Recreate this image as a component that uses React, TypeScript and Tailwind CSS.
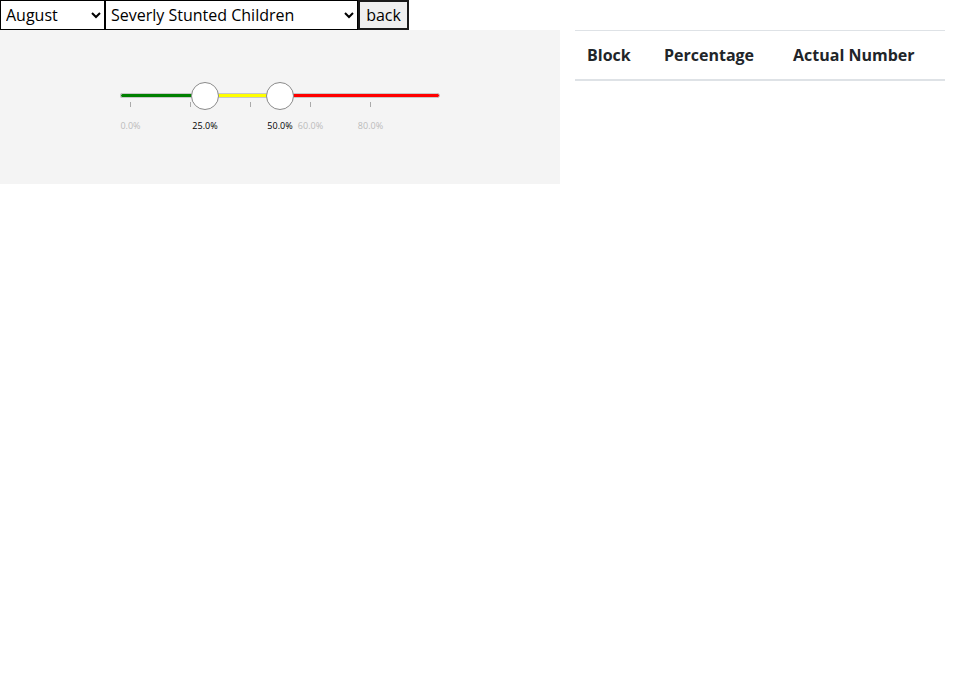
import React from 'react';

const ticks = [0, 20, 40, 60, 80];
const lower = 25;
const upper = 50;

const hidden = [20, 40];

// 0% sits 10px in from the track's left end, 3px per percent
const pos = (v: number) => 10 + v * 3;

const ThresholdSlider: React.FC = () => {
  return (
    <div className="relative w-[320px] h-[60px]">
      {/* track */}
      <div className="absolute left-0 right-0 top-0 h-[5px] rounded-full bg-[#ff0000] border border-[#c8c8c8]" />
      <div
        className="absolute left-0 top-0 h-[5px] rounded-l-full bg-[#008000] border-y border-l border-[#c8c8c8]"
        style={{ width: pos(lower) }}
      />
      <div
        className="absolute top-0 h-[5px] bg-[#ffff00] border-y border-[#c8c8c8]"
        style={{ left: pos(lower), width: pos(upper) - pos(lower) }}
      />

      {/* ticks */}
      {ticks.map((t) => (
        <div
          key={t}
          className="absolute top-[9px] h-[5px] w-px bg-[#aaa]"
          style={{ left: pos(t) }}
        />
      ))}

      {/* labels */}
      {ticks
        .filter((t) => !hidden.includes(t))
        .map((t) => (
          <span
            key={t}
            className="absolute top-[28px] -translate-x-1/2 text-[9px] leading-none text-[#bbbbbb]"
            style={{ left: pos(t) + 0.5 }}
          >
            {t.toFixed(1)}%
          </span>
        ))}
      {[lower, upper].map((v) => (
        <span
          key={v}
          className="absolute top-[28px] -translate-x-1/2 text-[9px] leading-none text-black"
          style={{ left: pos(v) }}
        >
          {v.toFixed(1)}%
        </span>
      ))}

      {/* handles */}
      {[lower, upper].map((v) => (
        <div
          key={v}
          className="absolute top-[-11px] -translate-x-1/2 w-[28px] h-[28px] rounded-full bg-white border border-[#8a8a8a]"
          style={{ left: pos(v) }}
        />
      ))}
    </div>
  );
};

export default function App() {
  return (
    <div className="w-[960px] h-[700px] bg-white text-[#212529] font-['Open_Sans',sans-serif]">
      {/* Filters */}
      <div className="flex h-[30px] text-[16px]">
        <select className="w-[105px] h-[30px] border border-black bg-white pl-[1px] text-black">
          <option>August</option>
        </select>
        <select className="w-[253px] h-[30px] border border-black bg-white pl-[1px] text-black">
          <option>Severly Stunted Children</option>
        </select>
        <button className="w-[51px] h-[30px] border-2 border-[#1a1a1a] bg-[#efefef] text-black">
          back
        </button>
      </div>

      <div className="flex">
        {/* Slider panel */}
        <div className="w-[560px] h-[154px] bg-[#f4f4f4] pl-[120px] pt-[63px]">
          <ThresholdSlider />
        </div>

        {/* Table */}
        <div className="w-[400px] px-[15px]">
          <table className="w-[370px] border-collapse text-[16px]">
            <thead>
              <tr className="border-t border-[#dee2e6] border-b-2">
                <th className="w-[77px] px-3 py-3 text-left font-bold leading-6">Block</th>
                <th className="w-[129px] px-3 py-3 text-left font-bold leading-6">Percentage</th>
                <th className="px-3 py-3 text-left font-bold leading-6">Actual Number</th>
              </tr>
            </thead>
            <tbody />
          </table>
        </div>
      </div>
    </div>
  );
}
